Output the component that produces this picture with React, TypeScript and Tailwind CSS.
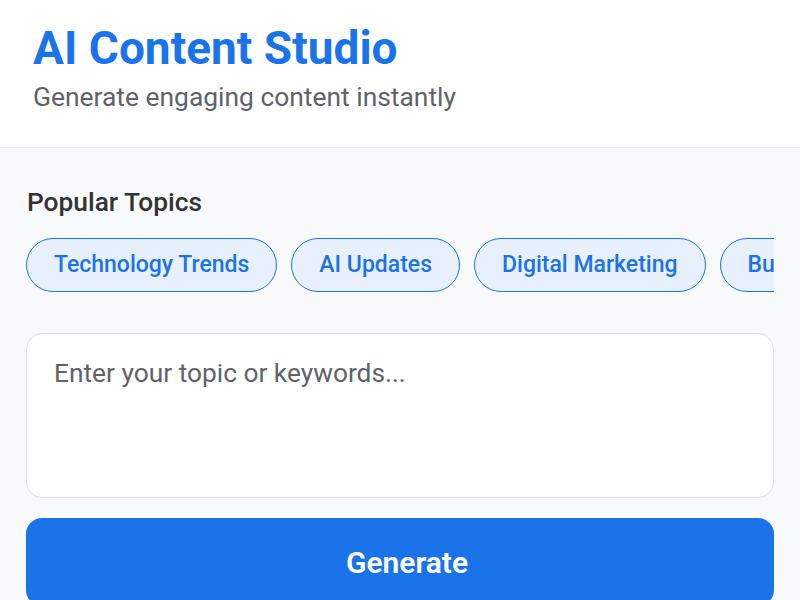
export default function App() {
  const topics = ["Technology Trends", "AI Updates", "Digital Marketing", "Business Strategy", "Health & Wellness"]

  return (
    <div className="min-h-screen bg-[#f8f9fa]" style={{ fontFamily: "Roboto, 'Liberation Sans', sans-serif" }}>
      <header className="bg-white border-b border-[#e8eaed] px-[33px] pt-[21px] pb-[33px]">
        <h1 className="text-[46px] leading-[54px] font-bold text-[#1a73e8]">AI Content Studio</h1>
        <p className="text-[26.4px] leading-[34px] text-[#5f6368] mt-[5px]">Generate engaging content instantly</p>
      </header>

      <main className="px-[26px] pt-[39px]">
        <h2 className="text-[26.3px] leading-[30px] font-medium text-[#333] pl-[1px]">Popular Topics</h2>

        <div className="flex gap-[14px] overflow-hidden mt-[21px]">
          {topics.map((t) => (
            <button
              key={t}
              className="shrink-0 h-[54px] px-[27px] rounded-full border border-[#1a73e8] bg-[#e8f0fe] text-[#1a73e8] text-[23px] font-medium"
            >
              {t}
            </button>
          ))}
        </div>

        <textarea
          placeholder="Enter your topic or keywords..."
          className="mt-[41px] block w-full h-[165px] resize-none rounded-[16px] border border-[#e0e0e0] bg-white px-[27px] pt-[22px] pb-[20px] text-[26.3px] leading-[34px] text-[#333] placeholder:text-[#5f6368] outline-none"
        />

        <button className="mt-[20px] w-full h-[88px] pl-[14px] rounded-[16px] bg-[#1a73e8] text-white text-[30px] font-semibold">
          Generate
        </button>
      </main>
    </div>
  )
}
